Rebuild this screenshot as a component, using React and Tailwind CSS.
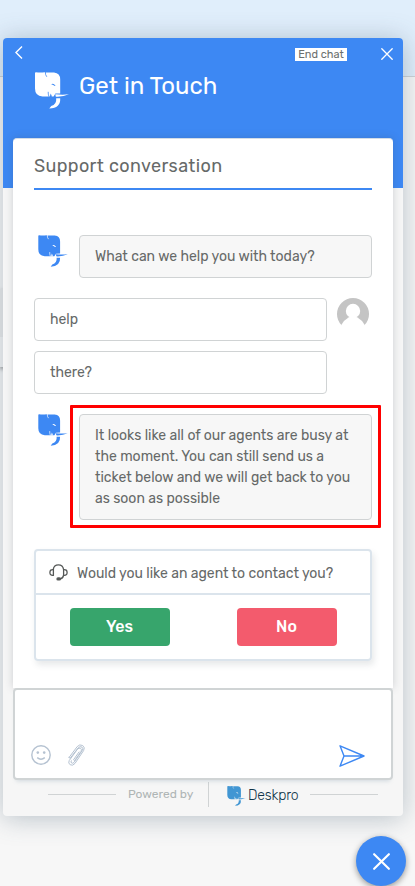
import React from 'react';

function Elephant({ className, eye }) {
  return (
    <svg viewBox="0 0 34 37" className={className} fill="currentColor">
      <path d="M0 1Q0 .2 1 .2Q5 .8 9.7 .2L11 .5H19Q25.2 1 25.2 7.5V21.4L20.4 21.6L18.6 24.6H7.5Q0 24 0 16.5Z" />
      <path d="M10.4 0Q10.2 3 11.8 4.8M13.2 19.8Q13 22 14 24.8" fill="none" stroke={eye} strokeWidth=".8" />
      <path d="M15.6 21.4Q16.8 23 16.8 25H14.8Z" fill={eye} />
      <path d="M16.2 12.4Q18.2 10.4 20.6 13.9Q19.2 14.1 18.6 13.2Q17.8 12.5 16.2 12.4Z" fill={eye} />
      <path d="M20.3 22.2Q27 23 34 22.3Q28 25.1 20.8 24.7Z" />
      <path d="M21.2 26.2H25.2Q25.8 36 14.3 36.6L16.2 34Q21.8 32.4 21.2 26.2Z" />
    </svg>
  );
}

function Cross({ className, width }) {
  return (
    <svg viewBox="0 0 12 12" className={className} fill="none" stroke="currentColor" strokeWidth={width} strokeLinecap="round">
      <path d="M.8 .8 11.2 11.2M11.2 .8.8 11.2" />
    </svg>
  );
}

function Header() {
  return (
    <header className="h-[150px] rounded-t-[4px] bg-[#3d88f3] text-white">
      <div className="flex h-[32px] items-center pl-[12px] pr-[10px]">
        <svg viewBox="0 0 8 13" className="-mt-[4px] h-[13px] w-[8px]" fill="none" stroke="currentColor" strokeWidth="1.4">
          <path d="M7 .6 1 6.5 7 12.4" />
        </svg>
        <div className="ml-auto flex h-[13px] w-[52px] items-center justify-center bg-white text-[11px] leading-[13px] text-[#6c6f6e]">
          End chat
        </div>
        <Cross className="ml-[34px] h-[12px] w-[12px]" width="1.3" />
      </div>
      <div className="flex items-start pl-[32px] pt-[2px]">
        <Elephant className="h-[37px] w-[34px]" eye="#3d88f3" />
        <h1 className="ml-[10px] whitespace-nowrap text-[24px] leading-[28px]">Get in Touch</h1>
      </div>
    </header>
  );
}

function Bubble({ children, className }) {
  return (
    <div className={'w-[293px] rounded-[4px] border border-[#d0d3d4] px-[15px] py-[10px] text-[14px] leading-[21px] tracking-[-0.02px] ' + className}>
      {children}
    </div>
  );
}

function Conversation() {
  return (
    <main className="relative mx-[10px] -mt-[50px] h-[550px] rounded-t-[4px] border-t border-[#d3dce6] bg-white px-[21px] shadow-[0_0_8px_rgba(60,70,80,0.22)]">
      <h2 className="h-[51px] border-b-2 border-[#3d88f3] pt-[14px] text-[18px] leading-[26px] tracking-[0.36px]">
        Support conversation
      </h2>
      <div className="mt-[45px] flex justify-between">
        <Elephant className="ml-[4px] h-[32px] w-[30px] text-[#3d88f3]" eye="#fff" />
        <Bubble className="bg-[#f7f7f7]">What can we help you with today?</Bubble>
      </div>
      <div className="mt-[20px] flex">
        <Bubble className="bg-white">help</Bubble>
        <svg viewBox="0 0 32 32" className="ml-[10px] h-[32px] w-[32px]">
          <circle cx="16" cy="16" r="16" fill="#c4c4c4" />
          <circle cx="16" cy="13" r="7.2" fill="#fff" />
          <path d="M4.3 27Q7 22 11.5 19.5Q16 17 20.5 19.5Q25 22 27.7 27V32H4.3Z" fill="#fff" />
        </svg>
      </div>
      <Bubble className="mt-[10px] bg-white">there?</Bubble>
      <div className="mt-[20px] flex justify-between">
        <Elephant className="ml-[4px] h-[32px] w-[30px] text-[#3d88f3]" eye="#fff" />
        <div className="relative">
          <Bubble className="bg-[#f7f7f7]">
            It looks like all of our agents are busy at the moment. You can still send us a ticket below and we will get back to you as soon as possible
          </Bubble>
          <div className="absolute -left-[9px] -top-[9px] h-[123px] w-[311px] rounded-[1px] border-[3px] border-[#ff0000]" />
        </div>
      </div>
      <section className="mt-[29px] h-[112px] rounded-[4px] border-2 border-[#dbe4ec] shadow-[2px_4px_6px_rgba(60,70,80,0.12)]">
        <div className="flex h-[44px] items-center border-b-2 border-[#dbe4ec] pl-[13px] text-[14px] tracking-[-0.02px]">
          <svg viewBox="0 0 19 17" className="h-[17px] w-[19px]" fill="none" stroke="#555857" strokeWidth="1.3">
            <path d="M4.2 5.6Q4.9 .9 9.4 .9T14.6 5.6M4.4 5.6V11.3Q.9 11.8 .9 8.5T4.4 5.6ZM14.6 5.6V11.3Q18.1 11.8 18.1 8.5T14.6 5.6ZM14.5 11.3Q14 14.5 10.8 14.9" />
            <rect x="8" y="13.9" width="3.4" height="2" rx="1" fill="#555857" />
          </svg>
          <span className="ml-[9px] mt-[2px] whitespace-nowrap">Would you like an agent to contact you?</span>
        </div>
        <div className="flex justify-between pl-[34px] pr-[33px] pt-[13px] text-[16px] font-medium text-white">
          <button className="h-[38px] w-[100px] rounded-[4px] bg-[#37a56c] pr-[1px]">Yes</button>
          <button className="h-[38px] w-[100px] rounded-[4px] bg-[#f35b6d] pr-[1px]">No</button>
        </div>
      </section>
    </main>
  );
}

function Composer() {
  return (
    <div className="relative mx-[10px] flex h-[92px] items-end rounded-[4px] border-2 border-[#d0d4d5] bg-white pb-[11px] pl-[16px] pr-[26px] shadow-[0_4px_4px_-3px_rgba(120,145,165,0.3)]">
      <svg viewBox="0 0 20 20" className="mb-[2px] h-[20px] w-[20px]" fill="none" stroke="#b5c2d1" strokeWidth="1.4">
        <circle cx="10" cy="10" r="9.2" />
        <circle cx="6.8" cy="7.6" r="1.3" fill="#b5c2d1" stroke="none" />
        <circle cx="13.2" cy="7.6" r="1.3" fill="#b5c2d1" stroke="none" />
        <path d="M6.2 12.6Q10 15.8 13.8 12.6" />
      </svg>
      <svg viewBox="0 0 17 22" className="mb-[1px] ml-[17px] h-[22px] w-[17px]" fill="none" stroke="#b5c2d1" strokeWidth="1" strokeLinecap="round" strokeLinejoin="round">
        <path d="M1 13.5 9.2 2.6Q11.6 -.2 14.7 1.5Q17.4 3.6 15.6 6.6L7 19.4Q4.8 22.2 2.2 20.8Q-.2 19.2 1.2 16.6L9.4 5.3Q11 3.4 12.7 4.4Q14.1 5.6 13 7.4L6.6 16.6L5.5 15.8L11 8M1 13.5 2.2 14.2L10.2 3.8Q12 1.9 14 3.1Q15.5 4.6 14.4 6.3L6 18.4Q4.7 19.8 3.6 19Q2.4 18.2 3.3 16.8" />
      </svg>
      <svg viewBox="0 0 26 22" className="ml-auto h-[22px] w-[26px]" fill="none" stroke="#3d88f3" strokeWidth="1.4" strokeLinejoin="round">
        <path d="M1 .8 25 11 1 21.2 5 11ZM5 11H25" />
      </svg>
    </div>
  );
}

export default function App() {
  return (
    <div className="relative h-[886px] w-[415px] overflow-hidden bg-[#f7f7f7] font-['Rubik','Roboto',sans-serif] text-[#666968]">
      <div className="absolute left-0 top-0 h-[77px] w-full border-b border-[#ccd2d7] bg-[#e0eefb]" />
      <div className="absolute left-0 top-[289px] h-[78px] w-[6px] border-t-[48px] border-[#ededed] bg-[#f7f7f7] shadow-[0_2px_4px_rgba(0,0,0,0.4)]" />
      <div className="relative pl-[3px] pt-[38px]">
        <div className="h-[778px] w-[400px] rounded-[4px] bg-[#f6f6f6] shadow-[0_2px_26px_rgba(70,95,115,0.36)]">
          <Header />
          <Conversation />
          <Composer />
          <footer className="flex h-[28px] items-center pl-[45px]">
            <div className="h-px w-[68px] bg-[#d0d3d4]" />
            <span className="ml-[12px] w-[65px] whitespace-nowrap text-[12px] text-[#afb5b5]">Powered by</span>
            <div className="ml-[15px] h-[25px] w-px bg-[#d0d3d4]" />
            <Elephant className="ml-[18px] mt-[4px] h-[20px] w-[19px] text-[#4196d3]" eye="#f7f7f7" />
            <span className="ml-[2px] mt-[3px] w-[50px] whitespace-nowrap text-[14px] font-light tracking-[-0.15px] text-[#0f3348]">Deskpro</span>
            <div className="ml-[12px] h-px w-[68px] bg-[#d0d3d4]" />
          </footer>
        </div>
      </div>
      <button className="absolute left-[356px] top-[836px] flex h-[50px] w-[50px] items-center justify-center rounded-full bg-[#3d88f3] text-white shadow-[0_2px_6px_rgba(0,0,0,0.4)]">
        <Cross className="h-[17px] w-[17px]" width="1.5" />
      </button>
    </div>
  );
}
